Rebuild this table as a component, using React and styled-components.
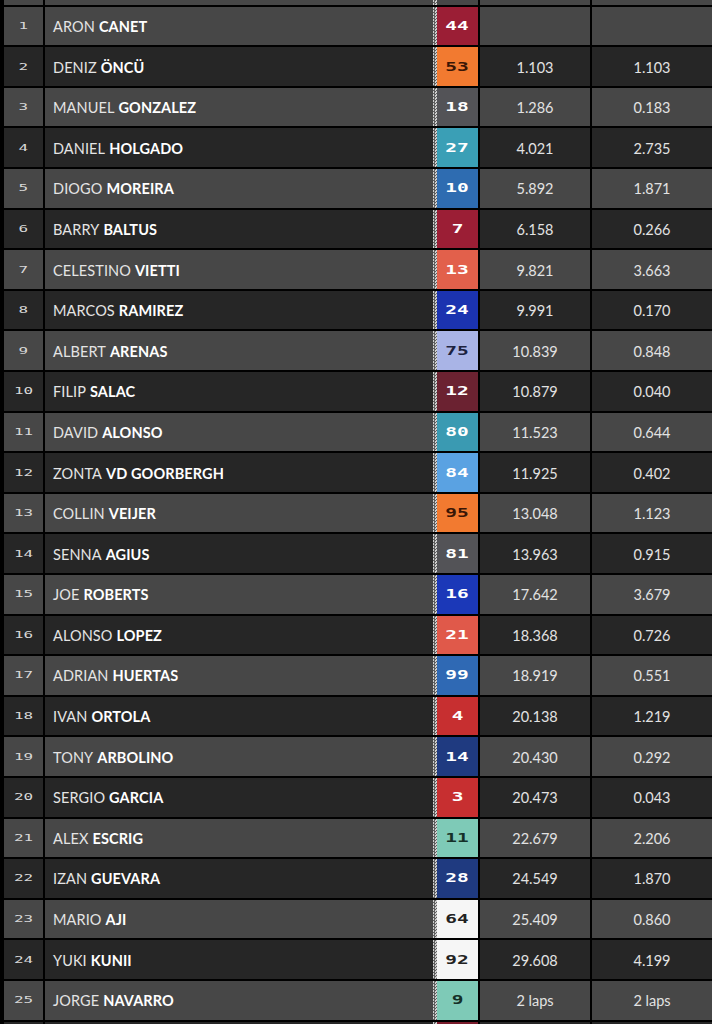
import styled, { createGlobalStyle } from 'styled-components';

const GlobalStyle = createGlobalStyle`
	html, body {
		margin: 0;
		padding: 0;
		background: #000;
	}
	body {
		font-family: Lato, 'Liberation Sans', sans-serif;
	}
`;

const riders = [
	{ pos: 1, first: 'ARON', last: 'CANET', num: 44, bg: '#9b1e35', fg: '#fff', gap: '', int: '' },
	{ pos: 2, first: 'DENIZ', last: 'ÖNCÜ', num: 53, bg: '#f27a30', fg: '#3a1606', gap: '1.103', int: '1.103' },
	{ pos: 3, first: 'MANUEL', last: 'GONZALEZ', num: 18, bg: '#535357', fg: '#fff', gap: '1.286', int: '0.183' },
	{ pos: 4, first: 'DANIEL', last: 'HOLGADO', num: 27, bg: '#3a9fb6', fg: '#fff', gap: '4.021', int: '2.735' },
	{ pos: 5, first: 'DIOGO', last: 'MOREIRA', num: 10, bg: '#2e6cb1', fg: '#fff', gap: '5.892', int: '1.871' },
	{ pos: 6, first: 'BARRY', last: 'BALTUS', num: 7, bg: '#9b1e35', fg: '#fff', gap: '6.158', int: '0.266' },
	{ pos: 7, first: 'CELESTINO', last: 'VIETTI', num: 13, bg: '#e2604b', fg: '#fff', gap: '9.821', int: '3.663' },
	{ pos: 8, first: 'MARCOS', last: 'RAMIREZ', num: 24, bg: '#1b33b0', fg: '#fff', gap: '9.991', int: '0.170' },
	{ pos: 9, first: 'ALBERT', last: 'ARENAS', num: 75, bg: '#a9b4e6', fg: '#1d2340', gap: '10.839', int: '0.848' },
	{ pos: 10, first: 'FILIP', last: 'SALAC', num: 12, bg: '#6b2231', fg: '#fff', gap: '10.879', int: '0.040' },
	{ pos: 11, first: 'DAVID', last: 'ALONSO', num: 80, bg: '#3a9ab2', fg: '#fff', gap: '11.523', int: '0.644' },
	{ pos: 12, first: 'ZONTA', last: 'VD GOORBERGH', num: 84, bg: '#5aa2e2', fg: '#fff', gap: '11.925', int: '0.402' },
	{ pos: 13, first: 'COLLIN', last: 'VEIJER', num: 95, bg: '#f27a30', fg: '#3a1606', gap: '13.048', int: '1.123' },
	{ pos: 14, first: 'SENNA', last: 'AGIUS', num: 81, bg: '#535357', fg: '#fff', gap: '13.963', int: '0.915' },
	{ pos: 15, first: 'JOE', last: 'ROBERTS', num: 16, bg: '#1b38b8', fg: '#fff', gap: '17.642', int: '3.679' },
	{ pos: 16, first: 'ALONSO', last: 'LOPEZ', num: 21, bg: '#e0594a', fg: '#fff', gap: '18.368', int: '0.726' },
	{ pos: 17, first: 'ADRIAN', last: 'HUERTAS', num: 99, bg: '#2f69b4', fg: '#fff', gap: '18.919', int: '0.551' },
	{ pos: 18, first: 'IVAN', last: 'ORTOLA', num: 4, bg: '#c72f30', fg: '#fff', gap: '20.138', int: '1.219' },
	{ pos: 19, first: 'TONY', last: 'ARBOLINO', num: 14, bg: '#1f3a80', fg: '#fff', gap: '20.430', int: '0.292' },
	{ pos: 20, first: 'SERGIO', last: 'GARCIA', num: 3, bg: '#c72f30', fg: '#fff', gap: '20.473', int: '0.043' },
	{ pos: 21, first: 'ALEX', last: 'ESCRIG', num: 11, bg: '#7ecab7', fg: '#153028', gap: '22.679', int: '2.206' },
	{ pos: 22, first: 'IZAN', last: 'GUEVARA', num: 28, bg: '#1f3a80', fg: '#fff', gap: '24.549', int: '1.870' },
	{ pos: 23, first: 'MARIO', last: 'AJI', num: 64, bg: '#f6f6f6', fg: '#222', gap: '25.409', int: '0.860' },
	{ pos: 24, first: 'YUKI', last: 'KUNII', num: 92, bg: '#f6f6f6', fg: '#222', gap: '29.608', int: '4.199' },
	{ pos: 25, first: 'JORGE', last: 'NAVARRO', num: 9, bg: '#7ecab7', fg: '#153028', gap: '2 laps', int: '2 laps' },
];

const Table = styled.div`
	display: flex;
	flex-direction: column;
	gap: 2px;
	padding-left: 4px;
	height: 1024px;
	overflow: hidden;
	background: #000;
`;

const Row = styled.div`
	display: grid;
	grid-template-columns: 39px 390px 4px 41px 112px 1fr;
	height: ${(p) => p.$h || 38.6}px;
	flex: none;
	background: ${(p) => (p.$light ? '#474747' : '#262626')};
`;

const PosCell = styled.div`
	display: flex;
	align-items: center;
	justify-content: center;
	color: #d8d8d8;
	padding-top: 1px;
`;

const NameCell = styled.div`
	display: flex;
	align-items: center;
	border-left: 2px solid #000;
	padding-left: 8px;
	padding-top: 1px;
	font-size: 14.5px;
	color: #e4e4e4;
	letter-spacing: 0.1px;
	white-space: nowrap;

	b {
		font-weight: 700;
		color: #fff;
		margin-left: 4px;
	}
`;

const Checker = styled.div`
	background-color: #9a9a9a;
	background-image: conic-gradient(#5e5e5e 25%, #cfcfcf 0 50%, #5e5e5e 0 75%, #cfcfcf 0);
	background-size: 3px 3px;
`;

const NumBox = styled.div`
	display: flex;
	align-items: center;
	justify-content: center;
	background: ${(p) => p.$bg};
	color: ${(p) => p.$fg};
`;

const Digits = styled.span`
	display: inline-block;
	font-family: 'DejaVu Sans Mono', monospace;
	font-weight: ${(p) => (p.$small ? 400 : 700)};
	font-size: ${(p) => (p.$small ? 11 : 15)}px;
	letter-spacing: 0;
	transform: ${(p) => (p.$small ? 'scale(1.45, 0.78)' : 'scale(1.3, 0.82)')};
`;

const TimeCell = styled.div`
	display: flex;
	align-items: center;
	justify-content: center;
	border-left: 2px solid #000;
	padding-top: 1px;
	font-size: 14.5px;
	color: #e2e2e2;
`;

const App = () => {
	return (
		<>
			<GlobalStyle />
			<Table>
				<Row $h={4.7} $light>
					<PosCell />
					<NameCell />
					<Checker />
					<NumBox $bg="#474747" />
					<TimeCell />
					<TimeCell />
				</Row>
				{riders.map((r) => (
					<Row key={r.pos} $light={r.pos % 2 === 1}>
						<PosCell>
							<Digits $small>{r.pos}</Digits>
						</PosCell>
						<NameCell>
							{r.first}
							<b>{r.last}</b>
						</NameCell>
						<Checker />
						<NumBox $bg={r.bg} $fg={r.fg}>
							<Digits>{r.num}</Digits>
						</NumBox>
						<TimeCell>{r.gap}</TimeCell>
						<TimeCell>{r.int}</TimeCell>
					</Row>
				))}
				<Row>
					<PosCell />
					<NameCell />
					<Checker />
					<NumBox $bg="#7a1c2c" />
					<TimeCell />
					<TimeCell />
				</Row>
			</Table>
		</>
	);
};

export default App;
